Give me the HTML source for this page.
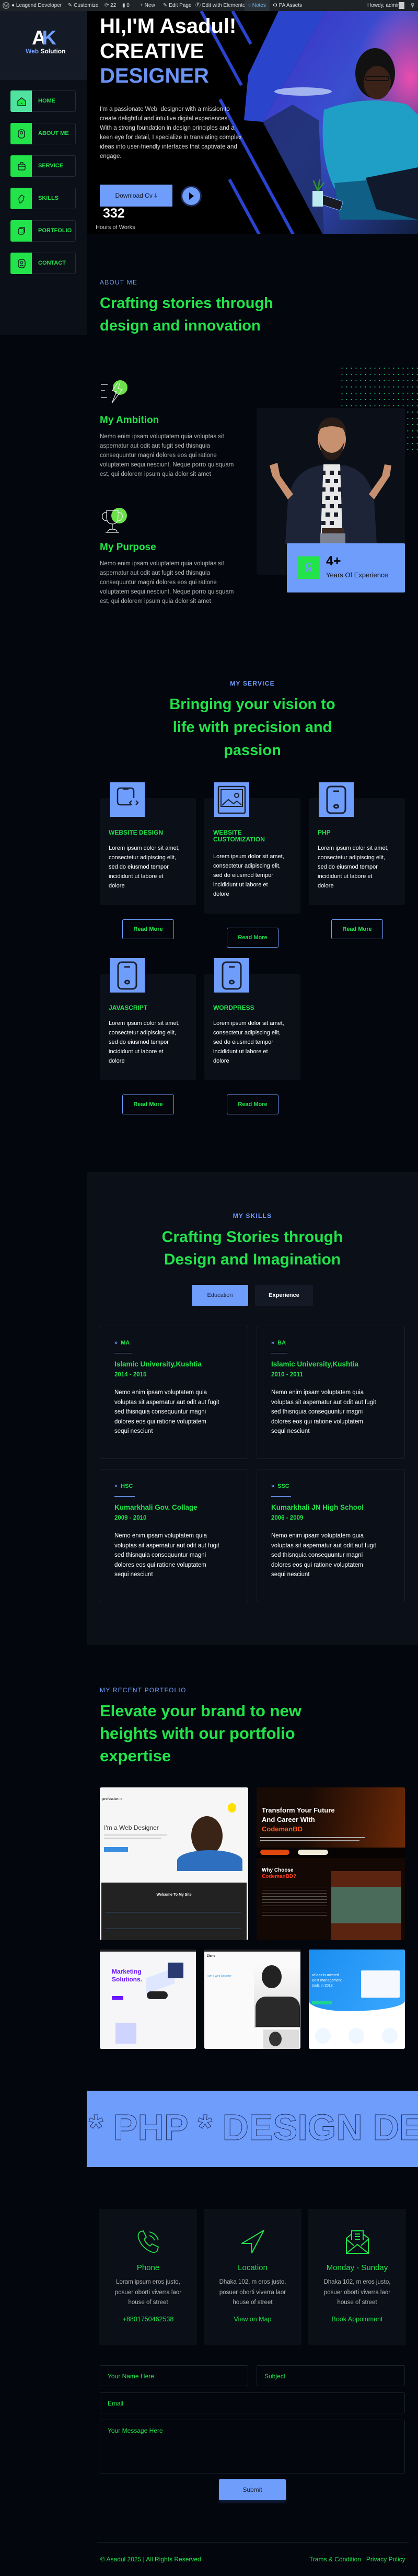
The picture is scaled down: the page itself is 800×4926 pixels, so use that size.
<!DOCTYPE html>
<html><head><meta charset="utf-8">
<style>
*{margin:0;padding:0;box-sizing:border-box}
body{width:800px;height:4926px;background:#03060c;font-family:"Liberation Sans",sans-serif;position:relative;overflow:hidden;color:#fff}
.a{position:absolute}
.g{color:#22e34a}.b{color:#6f9dfc}
.lbl{font-size:12px;letter-spacing:1.2px;color:#6f9dfc;line-height:14px}
.h2{font-size:29px;font-weight:bold;color:#22e34a;line-height:43px}
.p{font-size:11.5px;line-height:18px;color:#b4b4b4}
.nav{left:20px;width:125px;height:41px;border:1px solid #232b38;border-radius:3px}
.nav .sq{position:absolute;left:-1px;top:-1px;width:41px;height:41px;background:#22e34a;border-radius:3px 0 0 3px}
.nav span{position:absolute;left:52px;top:13px;font-size:11px;font-weight:bold;color:#22e34a}
.sc{background:#0a0f18;border-radius:3px}
.ib{width:67px;height:66px;background:#6f9dfc}
.st{font-size:12px;font-weight:bold;color:#22e34a;line-height:13px}
.stx{font-size:11px;line-height:18px;color:#fff}
.rm{width:99px;height:38px;border:1px solid #6f9dfc;border-radius:3px;font-size:11px;font-weight:bold;color:#22e34a;text-align:center;line-height:36px}
.ec{width:284px;height:255px;border:1px solid #1a2230;border-radius:4px}
.ec .dg{position:absolute;left:27px;top:26px;font-size:11px;font-weight:bold;color:#22e34a}
.ec .dg i{color:#6f9dfc;font-style:normal;margin-right:6px}
.ec .ul{position:absolute;left:27px;top:51px;height:1px;background:#8aa7e6}
.ec .t{position:absolute;left:27px;top:65px;font-size:13.5px;font-weight:bold;color:#22e34a}
.ec .y{position:absolute;left:27px;top:87px;font-size:11.5px;font-weight:bold;color:#22e34a}
.ec .x{position:absolute;left:27px;top:118px;font-size:11.5px;line-height:18.5px;color:#fff;width:205px}
.cc{width:187px;height:261px;background:#0a0f18;text-align:center}
.cc .t{position:absolute;left:0;right:0;top:104px;font-size:15px;color:#22e34a}
.cc .x{position:absolute;left:0;right:0;top:131px;font-size:11.5px;line-height:19.5px;color:#b4b4b4}
.cc .l{position:absolute;left:0;right:0;top:204px;font-size:12.5px;color:#22e34a}
.in{border:1px solid #1a2230;border-radius:3px}
.in span{position:absolute;left:14px;top:13px;font-size:12px;color:#22e34a}
</style></head><body>

<div class="a" style="left:0;top:0;width:800px;height:21px;background:#1d2327;font-size:10px;color:#dcdcdc;line-height:21px;white-space:nowrap">
<svg class="a" style="left:5px;top:4px" width="13" height="13" viewBox="0 0 13 13"><circle cx="6.5" cy="6.5" r="5.8" fill="none" stroke="#aaa" stroke-width="1.2"/><text x="6.5" y="10" font-size="9" text-anchor="middle" fill="#aaa" font-family="Liberation Serif">W</text></svg>
<span class="a" style="left:22px">● Leagend Developer</span>
<span class="a" style="left:130px">✎ Customize</span>
<span class="a" style="left:200px">⟳ 22</span>
<span class="a" style="left:234px">▮ 0</span>
<span class="a" style="left:268px">+ New</span>
<span class="a" style="left:312px">✎ Edit Page</span>
<span class="a" style="left:374px">Ⓔ Edit with Elementor</span>
<div class="a" style="left:468px;top:0;width:48px;height:21px;background:#2c3338"></div>
<span class="a" style="left:474px;color:#72aee6">◌ Notes</span>
<span class="a" style="left:522px">⚙ PA Assets</span>
<span class="a" style="left:703px">Howdy, admin</span>
<div class="a" style="left:763px;top:4px;width:11px;height:13px;background:#ccc"></div>
<span class="a" style="left:786px">⚲</span>
</div>

<div class="a" style="left:0;top:21px;width:166px;height:132px;background:#151b26"></div>
<div class="a" style="left:0;top:153px;width:166px;height:487px;background:#0a0f18"></div>
<div class="a" style="left:61px;top:52px;font-size:38px;font-weight:bold;color:#fff;letter-spacing:-8px">A<span style="color:#6f9dfc">K</span></div>
<div class="a" style="left:49px;top:91px;font-size:12px;font-weight:bold"><span class="b">Web</span> Solution</div>

<div class="a nav" style="top:173px"><div class="sq" style="background:#50e3a0"></div>
<svg class="a" style="left:10px;top:10px" width="21" height="21" viewBox="0 0 21 21"><path d="M3 9 L10.5 3 L18 9 V17 Q18 18 17 18 H4 Q3 18 3 17Z" fill="#22e34a" stroke="#0a0f18" stroke-width="1.3"/><rect x="10" y="13" width="1.2" height="2" fill="#0a0f18"/></svg><span>HOME</span></div>
<div class="a nav" style="top:235px"><div class="sq"></div>
<svg class="a" style="left:10px;top:9px" width="21" height="22" viewBox="0 0 21 22"><rect x="4" y="3" width="12" height="16" rx="5" fill="none" stroke="#0a0f18" stroke-width="1.3"/><circle cx="10" cy="9" r="2.5" fill="none" stroke="#0a0f18" stroke-width="1.2"/></svg><span>ABOUT ME</span></div>
<div class="a nav" style="top:297px"><div class="sq"></div>
<svg class="a" style="left:10px;top:9px" width="21" height="22" viewBox="0 0 21 22"><rect x="4" y="7" width="13" height="11" rx="2" fill="none" stroke="#0a0f18" stroke-width="1.3"/><path d="M8 7V4h5v3M4 11h13" fill="none" stroke="#0a0f18" stroke-width="1.3"/></svg><span>SERVICE</span></div>
<div class="a nav" style="top:359px"><div class="sq"></div>
<svg class="a" style="left:10px;top:9px" width="21" height="22" viewBox="0 0 21 22"><path d="M6 19 L5 10 L10 4 L15 7 L14 13 L9 19Z" fill="none" stroke="#0a0f18" stroke-width="1.3"/></svg><span>SKILLS</span></div>
<div class="a nav" style="top:421px"><div class="sq"></div>
<svg class="a" style="left:10px;top:9px" width="21" height="22" viewBox="0 0 21 22"><rect x="4" y="6" width="11" height="11" rx="3" fill="none" stroke="#0a0f18" stroke-width="1.3"/><path d="M7 6V4h9v9h-1" fill="none" stroke="#0a0f18" stroke-width="1.3"/><text x="9.5" y="14" font-size="6" text-anchor="middle" fill="#0a0f18">...</text></svg><span>PORTFOLIO</span></div>
<div class="a nav" style="top:483px"><div class="sq"></div>
<svg class="a" style="left:10px;top:9px" width="21" height="22" viewBox="0 0 21 22"><rect x="4" y="3" width="13" height="16" rx="5" fill="none" stroke="#0a0f18" stroke-width="1.3"/><circle cx="10.5" cy="9" r="2.3" fill="none" stroke="#0a0f18" stroke-width="1.2"/><path d="M7 16q3.5-4 7 0" fill="none" stroke="#0a0f18" stroke-width="1.2"/></svg><span>CONTACT</span></div>

<div class="a" style="left:166px;top:21px;width:634px;height:426px;background:#000;overflow:hidden">
<svg class="a" style="left:0;top:0" width="634" height="426" viewBox="166 21 634 426">
<defs><linearGradient id="ph" x1="0" y1="0" x2="1" y2="1"><stop offset="0" stop-color="#3a2fc4"/><stop offset="0.45" stop-color="#3a4fd0"/><stop offset="1" stop-color="#102040"/></linearGradient>
<radialGradient id="pk" cx="0.95" cy="0.3" r="0.35"><stop offset="0" stop-color="#ff4fb0" stop-opacity="0.9"/><stop offset="1" stop-color="#ff4fb0" stop-opacity="0"/></radialGradient></defs>
<polygon points="533,21 623,21 503,233 467,230 475,143" fill="#2a44cc"/>
<polygon points="623,21 800,21 800,447 617,447 503,233" fill="url(#ph)"/>
<polygon points="623,21 800,21 800,447 617,447 503,233" fill="url(#pk)"/>
<path d="M503 233 L560 200 L610 230 L620 447 L617 447Z" fill="#1e2d66" opacity="0.8"/>
<ellipse cx="580" cy="175" rx="55" ry="8" fill="#cfe2ff" opacity="0.7"/>
<path d="M620 210 Q700 180 780 200 L800 220 L800 350 L700 380 L640 360 Q610 300 620 210Z" fill="#1f9ec6"/>
<path d="M640 350 L760 340 L800 380 L800 420 L650 420Z" fill="#0f5f86"/>
<ellipse cx="718" cy="140" rx="38" ry="48" fill="#111"/>
<ellipse cx="722" cy="158" rx="26" ry="32" fill="#3a2218"/>
<rect x="700" y="146" width="44" height="8" rx="3" fill="none" stroke="#111" stroke-width="2"/>
<path d="M700 340 L800 320 L800 420 L720 400Z" fill="#101a2c"/>
<rect x="610" y="378" width="45" height="18" rx="3" fill="#1a1a22" stroke="#7fb5ff" stroke-width="1" transform="rotate(18 632 387)"/>
<rect x="598" y="365" width="20" height="30" fill="#bde9f0"/>
<path d="M608 365 l-8-20 M608 365 l4-22 M608 365 l12-16" stroke="#2f8a3a" stroke-width="3"/>
<g stroke="#2b44d0" stroke-width="6" fill="none"><line x1="385" y1="21" x2="462" y2="163"/><line x1="445" y1="21" x2="480" y2="84"/><line x1="421" y1="190" x2="562" y2="450"/><line x1="439" y1="343" x2="497" y2="450"/></g>
</svg>
</div>
<div class="a" style="left:191px;top:30px;font-size:40px;font-weight:bold;line-height:40px;white-space:nowrap">HI,I'M Asadul!</div>
<div class="a" style="left:191px;top:78px;font-size:40px;font-weight:bold;line-height:40px">CREATIVE</div>
<div class="a" style="left:191px;top:125px;font-size:40px;font-weight:bold;line-height:40px;color:#6b93f5">DESIGNER</div>
<div class="a" style="left:191px;top:200px;font-size:11.5px;line-height:18px;color:#ddd;white-space:nowrap">I'm a passionate Web &nbsp;designer with a mission to<br>create delightful and intuitive digital experiences.<br>With a strong foundation in design principles and a<br>keen eye for detail, I specialize in translating complex<br>ideas into user-friendly interfaces that captivate and<br>engage.</div>
<div class="a" style="left:191px;top:353px;width:139px;height:42px;background:#6f9dfc;color:#10182a;font-size:12px;text-align:center;line-height:42px">Download Cv ⤓</div>
<div class="a" style="left:346px;top:355px;width:40px;height:40px;border-radius:50%;background:#6f9dfc;border:3px solid #1e2a55"></div>
<div class="a" style="left:362px;top:368px;width:0;height:0;border-left:9px solid #000;border-top:7px solid transparent;border-bottom:7px solid transparent"></div>
<div class="a" style="left:197px;top:396px;font-size:25px;font-weight:bold;line-height:25px">332</div>
<div class="a" style="left:183px;top:429px;font-size:11px;color:#ccc">Hours of Works</div>

<div class="a lbl" style="left:191px;top:533px">ABOUT ME</div>
<div class="a h2" style="left:191px;top:559px;white-space:nowrap">Crafting stories through<br>design and innovation</div>
<div class="a" style="left:650px;top:698px;width:150px;height:170px;background-image:radial-gradient(circle,#23c77a 0.8px,transparent 1.2px);background-size:9px 12px"></div>
<svg class="a" style="left:190px;top:725px" width="60" height="48" viewBox="0 0 60 48"><circle cx="40" cy="16" r="14" fill="#6be04a"/><path d="M36 6 L25 22 L33 24 L24 46 L44 20 L36 18 L40 6" fill="none" stroke="#eee" stroke-width="1.2"/><path d="M3 10h13M3 22h8M3 35h12" stroke="#eee" stroke-width="1.2"/></svg>
<div class="a g" style="left:191px;top:793px;font-size:19px;font-weight:bold">My Ambition</div>
<div class="a p" style="left:191px;top:826px;white-space:nowrap">Nemo enim ipsam voluptatem quia voluptas sit<br>aspernatur aut odit aut fugit sed thisnquia<br>consequuntur magni dolores eos qui ratione<br>voluptatem sequi nesciunt. Neque porro quisquam<br>est, qui dolorem ipsum quia dolor sit amet</div>
<svg class="a" style="left:190px;top:970px" width="60" height="54" viewBox="0 0 60 54"><circle cx="38" cy="16" r="15" fill="#6be04a"/><path d="M14 6 H36 V18 Q36 32 25 32 Q14 32 14 18Z M14 10 Q4 10 6 20 Q8 26 15 26 M36 10 Q46 10 44 20 Q42 26 35 26 M25 32 V42 M16 48 Q16 42 25 42 Q34 42 34 48 M12 48 H38" fill="none" stroke="#eee" stroke-width="1.2"/></svg>
<div class="a g" style="left:191px;top:1036px;font-size:19px;font-weight:bold">My Purpose</div>
<div class="a p" style="left:191px;top:1069px;white-space:nowrap">Nemo enim ipsam voluptatem quia voluptas sit<br>aspernatur aut odit aut fugit sed thisnquia<br>consequuntur magni dolores eos qui ratione<br>voluptatem sequi nesciunt. Neque porro quisquam<br>est, qui dolorem ipsum quia dolor sit amet</div>
<div class="a" style="left:491px;top:780px;width:284px;height:319px;background:#0a0f18;border-radius:4px;overflow:hidden">
<svg width="284" height="319" viewBox="0 0 284 319">
<path d="M60 175 Q70 120 120 110 L170 110 Q215 120 225 175 L230 260 L55 260Z" fill="#1d2437"/>
<path d="M128 108 L160 108 L165 260 L122 260Z" fill="#e8e8e8"/>
<g fill="#1a1f2c"><rect x="124" y="120" width="8" height="8"/><rect x="140" y="120" width="8" height="8"/><rect x="156" y="120" width="6" height="8"/><rect x="132" y="136" width="8" height="8"/><rect x="148" y="136" width="8" height="8"/><rect x="124" y="152" width="8" height="8"/><rect x="140" y="152" width="8" height="8"/><rect x="156" y="152" width="7" height="8"/><rect x="132" y="168" width="8" height="8"/><rect x="148" y="168" width="8" height="8"/><rect x="124" y="184" width="8" height="8"/><rect x="140" y="184" width="8" height="8"/><rect x="156" y="184" width="7" height="8"/><rect x="132" y="200" width="8" height="8"/><rect x="148" y="200" width="8" height="8"/><rect x="124" y="216" width="8" height="8"/><rect x="140" y="216" width="8" height="8"/></g>
<rect x="125" y="230" width="42" height="10" fill="#3a2a22"/>
<rect x="122" y="240" width="48" height="79" fill="#7c8290"/>
<ellipse cx="144" cy="60" rx="27" ry="33" fill="#c7906e"/>
<path d="M117 50 Q118 20 144 18 Q171 20 171 50 L166 40 Q144 30 122 40Z" fill="#2a1c16"/>
<path d="M120 65 Q125 100 144 100 Q163 100 168 65 Q160 85 144 86 Q128 85 120 65Z" fill="#2a1c16"/>
<path d="M60 175 L30 130 L25 110 L40 105 L45 130 L70 165Z" fill="#c7906e"/>
<path d="M225 175 L255 130 L258 110 L245 108 L240 130 L215 165Z" fill="#c7906e"/>
</svg></div>
<div class="a" style="left:549px;top:1039px;width:226px;height:94px;background:#6f9dfc;border-radius:2px"></div>
<div class="a" style="left:569px;top:1064px;width:44px;height:43px;background:#22e34a"></div>
<svg class="a" style="left:583px;top:1074px" width="16" height="24" viewBox="0 0 16 24"><circle cx="8" cy="8" r="5" fill="none" stroke="#6f9dfc" stroke-width="2"/><path d="M4 12 L2 20 L6 18 L8 14 L10 18 L14 20 L12 12" fill="#6f9dfc"/></svg>
<div class="a" style="left:624px;top:1059px;font-size:25px;font-weight:bold;color:#000">4+</div>
<div class="a" style="left:624px;top:1092px;font-size:13px;color:#111">Years Of Experience</div>

<div class="a lbl" style="left:0;width:966px;text-align:center;top:1300px;font-weight:bold">MY SERVICE</div>
<div class="a h2" style="left:0;width:966px;text-align:center;top:1325px;line-height:44px">Bringing your vision to<br>life with precision and<br>passion</div>

<div class="a sc" style="left:191px;top:1526px;width:184px;height:205px"></div>
<div class="a sc" style="left:391px;top:1526px;width:184px;height:221px"></div>
<div class="a sc" style="left:591px;top:1526px;width:184px;height:205px"></div>
<div class="a sc" style="left:191px;top:1862px;width:184px;height:203px"></div>
<div class="a sc" style="left:391px;top:1862px;width:184px;height:203px"></div>

<div class="a ib" style="left:210px;top:1496px"><svg width="67" height="66" viewBox="0 0 67 66"><path d="M40 43 H21 Q15 43 15 37 V17 Q15 11 21 11 H40 Q46 11 46 17 V30" fill="none" stroke="#1a2030" stroke-width="2.5"/><path d="M27 11 v2 h8 v-2" fill="none" stroke="#1a2030" stroke-width="2"/><path d="M42 35 l-4 4 4 4 M50 35 l4 4 -4 4" fill="none" stroke="#1a2030" stroke-width="2.2"/></svg></div>
<div class="a ib" style="left:410px;top:1496px"><svg width="67" height="66" viewBox="0 0 67 66"><rect x="8" y="8" width="51" height="51" rx="2" fill="none" stroke="#1a2030" stroke-width="2.5"/><rect x="13" y="14" width="41" height="32" fill="none" stroke="#1a2030" stroke-width="2"/><path d="M15 44 L27 33 L37 41 L43 36 L52 43" fill="none" stroke="#1a2030" stroke-width="2"/><circle cx="43" cy="25" r="4" fill="none" stroke="#1a2030" stroke-width="2"/></svg></div>
<div class="a ib" style="left:610px;top:1496px"><svg width="67" height="66" viewBox="0 0 67 66"><rect x="16" y="8" width="35" height="51" rx="7" fill="none" stroke="#1a2030" stroke-width="3"/><line x1="28" y1="17" x2="39" y2="17" stroke="#1a2030" stroke-width="3"/><ellipse cx="33.5" cy="46" rx="4" ry="3" fill="none" stroke="#1a2030" stroke-width="3"/></svg></div>
<div class="a ib" style="left:210px;top:1832px"><svg width="67" height="66" viewBox="0 0 67 66"><rect x="16" y="8" width="35" height="51" rx="7" fill="none" stroke="#1a2030" stroke-width="3"/><line x1="28" y1="17" x2="39" y2="17" stroke="#1a2030" stroke-width="3"/><ellipse cx="33.5" cy="46" rx="4" ry="3" fill="none" stroke="#1a2030" stroke-width="3"/></svg></div>
<div class="a ib" style="left:410px;top:1832px"><svg width="67" height="66" viewBox="0 0 67 66"><rect x="16" y="8" width="35" height="51" rx="7" fill="none" stroke="#1a2030" stroke-width="3"/><line x1="28" y1="17" x2="39" y2="17" stroke="#1a2030" stroke-width="3"/><ellipse cx="33.5" cy="46" rx="4" ry="3" fill="none" stroke="#1a2030" stroke-width="3"/></svg></div>

<div class="a st" style="left:208px;top:1586px">WEBSITE DESIGN</div>
<div class="a stx" style="left:208px;top:1613px">Lorem ipsum dolor sit amet,<br>consectetur adipiscing elit,<br>sed do eiusmod tempor<br>incididunt ut labore et<br>dolore</div>
<div class="a st" style="left:408px;top:1586px">WEBSITE<br>CUSTOMIZATION</div>
<div class="a stx" style="left:408px;top:1629px">Lorem ipsum dolor sit amet,<br>consectetur adipiscing elit,<br>sed do eiusmod tempor<br>incididunt ut labore et<br>dolore</div>
<div class="a st" style="left:608px;top:1586px">PHP</div>
<div class="a stx" style="left:608px;top:1613px">Lorem ipsum dolor sit amet,<br>consectetur adipiscing elit,<br>sed do eiusmod tempor<br>incididunt ut labore et<br>dolore</div>
<div class="a st" style="left:208px;top:1921px">JAVASCRIPT</div>
<div class="a stx" style="left:208px;top:1948px">Lorem ipsum dolor sit amet,<br>consectetur adipiscing elit,<br>sed do eiusmod tempor<br>incididunt ut labore et<br>dolore</div>
<div class="a st" style="left:408px;top:1921px">WORDPRESS</div>
<div class="a stx" style="left:408px;top:1948px">Lorem ipsum dolor sit amet,<br>consectetur adipiscing elit,<br>sed do eiusmod tempor<br>incididunt ut labore et<br>dolore</div>

<div class="a rm" style="left:234px;top:1758px">Read More</div>
<div class="a rm" style="left:434px;top:1774px">Read More</div>
<div class="a rm" style="left:634px;top:1758px">Read More</div>
<div class="a rm" style="left:234px;top:2093px">Read More</div>
<div class="a rm" style="left:434px;top:2093px">Read More</div>

<div class="a" style="left:166px;top:2241px;width:634px;height:904px;background:#0a0f18"></div>
<div class="a lbl" style="left:0;width:966px;text-align:center;top:2318px;font-weight:bold">MY SKILLS</div>
<div class="a h2" style="left:0;width:966px;text-align:center;top:2344px;font-size:30px">Crafting Stories through<br>Design and Imagination</div>
<div class="a" style="left:367px;top:2457px;width:108px;height:40px;background:#6f9dfc;border-radius:2px;font-size:11px;color:#1a2030;text-align:center;line-height:40px">Education</div>
<div class="a" style="left:488px;top:2457px;width:111px;height:40px;background:#141a25;border-radius:2px;font-size:11px;font-weight:bold;color:#fff;text-align:center;line-height:40px">Experience</div>

<div class="a ec" style="left:191px;top:2535px"><div class="dg"><i>»</i>MA</div><div class="ul" style="width:33px"></div><div class="t">Islamic University,Kushtia</div><div class="y">2014 - 2015</div><div class="x">Nemo enim ipsam voluptatem quia voluptas sit aspernatur aut odit aut fugit sed thisnquia consequuntur magni dolores eos qui ratione voluptatem sequi nesciunt</div></div>
<div class="a ec" style="left:491px;top:2535px"><div class="dg"><i>»</i>BA</div><div class="ul" style="width:31px"></div><div class="t">Islamic University,Kushtia</div><div class="y">2010 - 2011</div><div class="x">Nemo enim ipsam voluptatem quia voluptas sit aspernatur aut odit aut fugit sed thisnquia consequuntur magni dolores eos qui ratione voluptatem sequi nesciunt</div></div>
<div class="a ec" style="left:191px;top:2809px"><div class="dg"><i>»</i>HSC</div><div class="ul" style="width:39px;background:#6f9dfc"></div><div class="t">Kumarkhali Gov. Collage</div><div class="y">2009 - 2010</div><div class="x">Nemo enim ipsam voluptatem quia voluptas sit aspernatur aut odit aut fugit sed thisnquia consequuntur magni dolores eos qui ratione voluptatem sequi nesciunt</div></div>
<div class="a ec" style="left:491px;top:2809px"><div class="dg"><i>»</i>SSC</div><div class="ul" style="width:38px;background:#6f9dfc"></div><div class="t">Kumarkhali JN High School</div><div class="y">2006 - 2009</div><div class="x">Nemo enim ipsam voluptatem quia voluptas sit aspernatur aut odit aut fugit sed thisnquia consequuntur magni dolores eos qui ratione voluptatem sequi nesciunt</div></div>

<div class="a lbl" style="left:191px;top:3225px">MY RECENT PORTFOLIO</div>
<div class="a h2" style="left:191px;top:3250px;font-size:31px;line-height:43px;white-space:nowrap">Elevate your brand to new<br>heights with our portfolio<br>expertise</div>

<div class="a" style="left:191px;top:3418px;width:284px;height:292px;background:#f6f6f6;border-radius:3px;overflow:hidden">
<div class="a" style="left:5px;top:20px;font-size:6px;font-weight:bold;color:#333">profession :&gt;</div>
<div class="a" style="left:8px;top:70px;font-size:12px;color:#333">I'm a Web Designer</div>
<div class="a" style="left:8px;top:90px;width:120px;height:2px;background:#ccc"></div>
<div class="a" style="left:8px;top:96px;width:110px;height:2px;background:#ccc"></div>
<div class="a" style="left:8px;top:114px;width:46px;height:10px;background:#3b8de0"></div>
<div class="a" style="left:175px;top:55px;width:60px;height:75px;border-radius:50%;background:#3a2418"></div>
<div class="a" style="left:148px;top:120px;width:125px;height:40px;border-radius:50% 50% 0 0;background:#2f6fc0"></div>
<div class="a" style="left:245px;top:30px;width:16px;height:18px;border-radius:50%;background:#ffe000"></div>
<div class="a" style="left:3px;top:182px;width:278px;height:110px;background:#222"></div>
<div class="a" style="left:0;width:284px;text-align:center;top:202px;font-size:7px;color:#fff;font-weight:bold">Welcome To My Site</div>
<div class="a" style="left:10px;top:238px;width:260px;height:1px;background:#3a6a9a"></div>
<div class="a" style="left:10px;top:270px;width:260px;height:1px;background:#3a6a9a"></div>
</div>
<div class="a" style="left:491px;top:3418px;width:284px;height:292px;background:linear-gradient(100deg,#180a04 30%,#7a2e08);border-radius:3px;overflow:hidden">
<div class="a" style="left:10px;top:35px;font-size:13px;font-weight:bold;color:#fff;line-height:18px">Transform Your Future<br>And Career With<br><span style="color:#ff5a1f">CodemanBD</span></div>
<div class="a" style="left:7px;top:95px;width:200px;height:2px;background:#aaa"></div>
<div class="a" style="left:7px;top:101px;width:190px;height:2px;background:#aaa"></div>
<div class="a" style="left:0;top:115px;width:284px;height:20px;background:#060302"></div>
<div class="a" style="left:7px;top:119px;width:56px;height:10px;border-radius:5px;background:#e0480f"></div>
<div class="a" style="left:79px;top:119px;width:58px;height:10px;border-radius:5px;background:#f0ead8"></div>
<div class="a" style="left:0;top:135px;width:284px;height:157px;background:#130803"></div>
<div class="a" style="left:10px;top:153px;font-size:10px;font-weight:bold;color:#fff;line-height:12px">Why Choose<br><span style="color:#ff3a1f">CodemanBD?</span></div>
<div class="a" style="left:143px;top:160px;width:134px;height:132px;background:#5a2410"></div>
<div class="a" style="left:143px;top:190px;width:134px;height:70px;background:#4a6a5a"></div>
<div class="a" style="left:10px;top:190px;width:125px;height:60px;background:repeating-linear-gradient(#888 0 1px,transparent 1px 6px);opacity:.6"></div>
</div>
<div class="a" style="left:191px;top:3728px;width:184px;height:190px;background:#f6f6f8;border-radius:3px;overflow:hidden">
<div class="a" style="left:0;top:0;width:184px;height:4px;background:#222"></div>
<div class="a" style="left:23px;top:35px;font-size:12px;font-weight:bold;color:#6a16ff;line-height:15px">Marketing<br>Solutions.</div>
<div class="a" style="left:23px;top:89px;width:22px;height:7px;background:#6a16ff"></div>
<div class="a" style="left:88px;top:45px;width:55px;height:30px;background:#dfe6ff;transform:skewY(-20deg)"></div>
<div class="a" style="left:130px;top:25px;width:30px;height:30px;background:#2a3a70"></div>
<div class="a" style="left:90px;top:80px;width:40px;height:15px;background:#222;border-radius:8px"></div>
<div class="a" style="left:30px;top:140px;width:40px;height:40px;background:#cfd4ff"></div>
</div>
<div class="a" style="left:391px;top:3728px;width:184px;height:190px;background:#fafafa;border-radius:3px;overflow:hidden">
<div class="a" style="left:0;top:0;width:184px;height:4px;background:#222"></div>
<div class="a" style="left:5px;top:10px;font-size:6px;font-weight:bold;color:#222">Zieno</div>
<div class="a" style="left:5px;top:48px;font-size:5px;color:#3b9be0">I am a Web Designer</div>
<div class="a" style="left:95px;top:30px;width:88px;height:120px;background:linear-gradient(#fafafa,#ddd)"></div>
<div class="a" style="left:110px;top:30px;width:38px;height:44px;border-radius:50%;background:#222"></div>
<div class="a" style="left:98px;top:90px;width:85px;height:58px;background:#2a2a2a;border-radius:20px 20px 0 0"></div>
<div class="a" style="left:113px;top:153px;width:68px;height:37px;background:#ddd"></div>
<div class="a" style="left:124px;top:157px;width:24px;height:28px;border-radius:50%;background:#333"></div>
</div>
<div class="a" style="left:591px;top:3728px;width:184px;height:190px;background:#fff;border-radius:3px;overflow:hidden">
<div class="a" style="left:0;top:0;width:184px;height:118px;background:linear-gradient(120deg,#1a8df0,#3aa8ff);border-radius:0 0 60% 40%/0 0 20px 20px"></div>
<div class="a" style="left:6px;top:45px;font-size:7px;color:#fff;line-height:10px">aSaas is awared<br>Best management<br>tools in 2018.</div>
<div class="a" style="left:100px;top:40px;width:74px;height:52px;background:#f5f8ff;border-radius:2px"></div>
<div class="a" style="left:6px;top:98px;width:38px;height:7px;background:#1ed490"></div>
<div class="a" style="left:12px;top:150px;width:30px;height:30px;border-radius:50%;background:#eef6ff"></div>
<div class="a" style="left:76px;top:150px;width:30px;height:30px;border-radius:50%;background:#eef6ff"></div>
<div class="a" style="left:140px;top:150px;width:30px;height:30px;border-radius:50%;background:#eef6ff"></div>
</div>

<div class="a" style="left:166px;top:3998px;width:634px;height:146px;background:#6f9dfc;overflow:hidden">
<div class="a" style="left:4px;top:35px;font-size:70px;font-weight:bold;line-height:70px;white-space:nowrap;color:transparent;-webkit-text-stroke:1px #22305e">* PHP * DESIGN DESIGN</div>
</div>

<div class="a cc" style="left:190px;top:4224px">
<svg class="a" style="left:69px;top:38px" width="50" height="50" viewBox="0 0 50 50"><path d="M9 6 L15 4 L21 16 L17 20 Q20 28 28 33 L32 29 L44 35 L42 42 Q38 47 30 44 Q12 36 6 18 Q4 10 9 6Z" fill="none" stroke="#22e34a" stroke-width="1.8"/><path d="M27 6 Q40 9 44 22 M27 13 Q34 15 37 22" fill="none" stroke="#22e34a" stroke-width="1.8"/></svg>
<div class="t">Phone</div><div class="x">Loram ipsum eros justo,<br>posuer oborti viverra laor<br>house of street</div><div class="l">+8801750462538</div></div>
<div class="a cc" style="left:390px;top:4224px">
<svg class="a" style="left:69px;top:38px" width="50" height="50" viewBox="0 0 50 50"><path d="M46 3 L4 28 L22 28 L23 46Z" fill="none" stroke="#22e34a" stroke-width="2" stroke-linejoin="round"/></svg>
<div class="t">Location</div><div class="x">Dhaka 102, m eros justo,<br>posuer oborti viverra laor<br>house of street</div><div class="l">View on Map</div></div>
<div class="a cc" style="left:590px;top:4224px">
<svg class="a" style="left:69px;top:38px" width="50" height="50" viewBox="0 0 50 50"><path d="M4 18 L4 47 L46 47 L46 18 L36 10 M14 10 L4 18 M4 47 L25 30 L46 47 M4 20 L18 32 M46 20 L32 32" fill="none" stroke="#22e34a" stroke-width="2"/><path d="M14 22 V4 H36 V22" fill="none" stroke="#22e34a" stroke-width="2"/><path d="M20 10h10M20 15h10M20 20h10" stroke="#22e34a" stroke-width="2"/><rect x="21" y="2" width="8" height="3" fill="#22e34a"/></svg>
<div class="t">Monday - Sunday</div><div class="x">Dhaka 102, m eros justo,<br>posuer oborti viverra laor<br>house of street</div><div class="l">Book Appoinment</div></div>

<div class="a in" style="left:191px;top:4523px;width:284px;height:40px"><span>Your Name Here</span></div>
<div class="a in" style="left:491px;top:4523px;width:284px;height:40px"><span>Subject</span></div>
<div class="a in" style="left:191px;top:4575px;width:584px;height:40px"><span>Email</span></div>
<div class="a in" style="left:191px;top:4627px;width:584px;height:103px"><span style="top:13px">Your Message Here</span></div>
<div class="a" style="left:419px;top:4741px;width:128px;height:40px;background:#6f9dfc;border-radius:2px;font-size:12px;color:#1a2030;text-align:center;line-height:40px;box-shadow:0 4px 6px rgba(60,100,200,.3)">Submit</div>

<div class="a" style="left:185px;top:4861px;width:597px;height:1px;background:#1a2230"></div>
<div class="a g" style="left:192px;top:4887px;font-size:12px">© Asadul 2025 | All Rights Reserved</div>
<div class="a g" style="left:592px;top:4887px;font-size:12px;white-space:nowrap">Trams &amp; Condition &nbsp;&nbsp;Privacy Policy</div>
</body></html>
